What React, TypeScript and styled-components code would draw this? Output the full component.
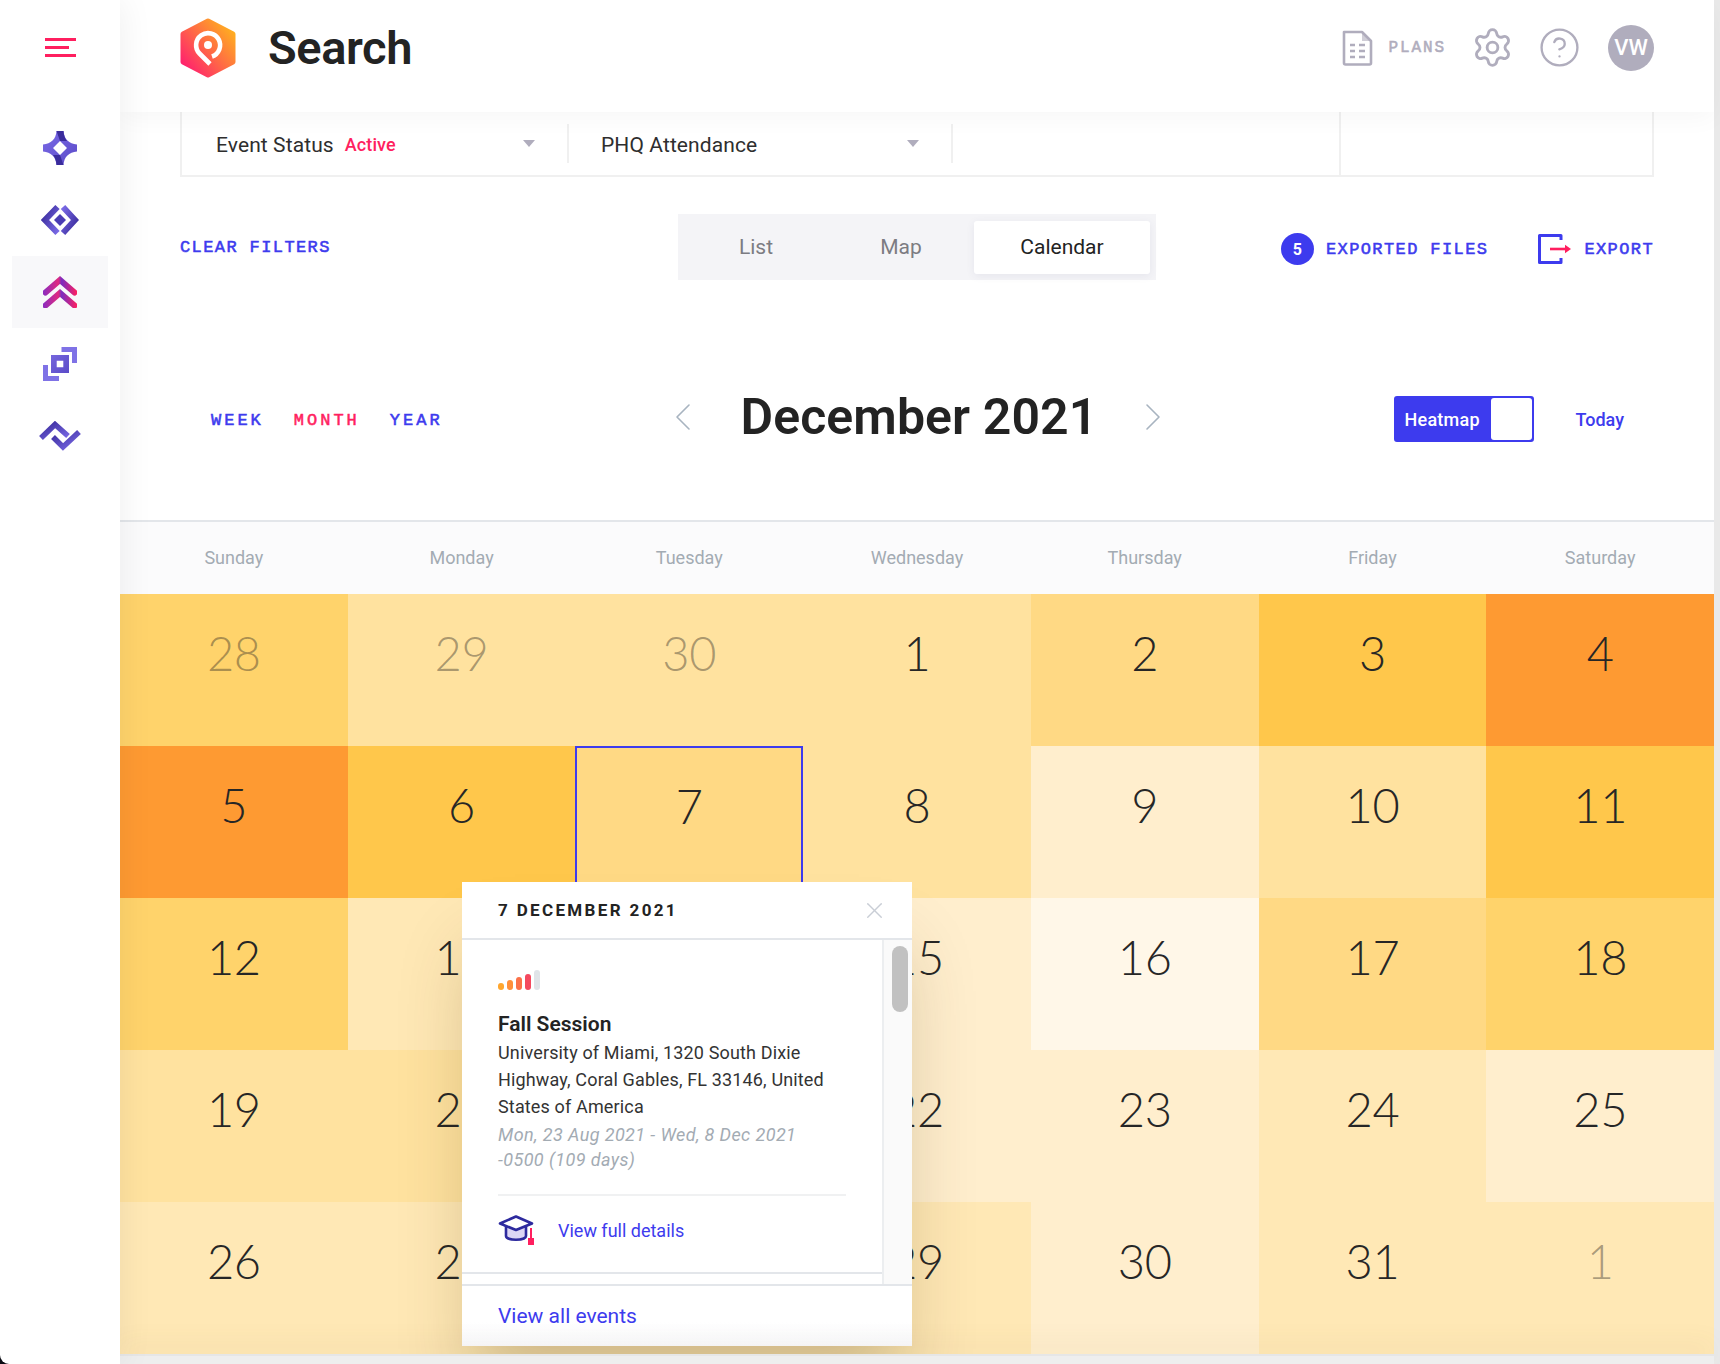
import React from "react";
import styled, { createGlobalStyle } from "styled-components";
import { Settings, CircleHelp, X, ChevronLeft, ChevronRight } from "lucide-react";

const SANS = `"Roboto", "Liberation Sans", sans-serif`;
const MONO = `"Liberation Mono", "DejaVu Sans Mono", monospace`;
const BLUE = "#3d3bee";
const PINK = "#ff1f5f";
const GRAYICON = "#b0adbd";

const Global = createGlobalStyle`
  html, body { margin: 0; padding: 0; background: #0c0c14; }
  * { box-sizing: border-box; }
  body { font-family: ${SANS}; color: #232323; }
`;

const Shell = styled.div`
  width: 1720px;
  height: 1364px;
  display: flex;
  overflow: hidden;
  background: #0c0c14;
`;

const Sidebar = styled.aside`
  width: 120px;
  flex: none;
  background: #fff;
  border-bottom-left-radius: 9px;
  display: flex;
  flex-direction: column;
  align-items: center;
  padding-top: 38px;
  position: relative;
  z-index: 4;
  box-shadow: 0 0 36px rgba(0, 0, 0, 0.07);
`;

const Burger = styled.div`
  width: 31px;
  height: 19px;
  display: flex;
  flex-direction: column;
  justify-content: space-between;
  margin-bottom: 55px;
  span { display: block; height: 3px; background: ${PINK}; }
  span:nth-child(2) { width: 24px; }
`;

const NavItem = styled.div<{ $active?: boolean }>`
  width: 96px;
  height: 72px;
  display: flex;
  align-items: center;
  justify-content: center;
  background: ${(p) => (p.$active ? "#f8f8fa" : "transparent")};
`;

const Main = styled.main`
  flex: 1;
  height: 100%;
  display: flex;
  flex-direction: column;
  background: #fff;
  border-right: 6px solid #e9e9e9;
  position: relative;
`;

const Header = styled.header`
  height: 112px;
  flex: none;
  display: flex;
  align-items: center;
  padding: 0 60px 0 60px;
  background: #fff;
  box-shadow: 0 6px 24px rgba(0, 0, 0, 0.035);
  position: relative;
  z-index: 2;
`;

const LogoWrap = styled.div`
  width: 58px;
  height: 60px;
  margin-top: -17px;
`;

const Title = styled.h1`
  margin: -17px 0 0 30px;
  font-size: 47px;
  font-weight: 600;
  letter-spacing: -0.4px;
  color: #232323;
`;

const HeaderRight = styled.div`
  margin-left: auto;
  margin-top: -17px;
  display: flex;
  align-items: center;
`;

const MonoLabel = styled.span<{ $color?: string; $wide?: boolean }>`
  font-family: ${MONO};
  font-size: 17px;
  font-weight: 400;
  -webkit-text-stroke: 0.55px currentColor;
  letter-spacing: ${(p) => (p.$wide ? "3px" : "1.4px")};
  color: ${(p) => p.$color || BLUE};
  white-space: nowrap;
`;

const PlansLabel = styled(MonoLabel)`
  margin: 0 25px 0 15px;
  font-size: 16px;
  letter-spacing: 1.9px;
`;

const HelpWrap = styled.div`
  margin: 0 27px 0 24px;
  display: flex;
`;

const Avatar = styled.div`
  width: 46px;
  height: 46px;
  border-radius: 50%;
  background: ${GRAYICON};
  color: #fff;
  font-size: 22px;
  font-weight: 500;
  display: flex;
  align-items: center;
  justify-content: center;
`;

const FilterBox = styled.div`
  margin: 0 60px;
  height: 65px;
  flex: none;
  display: flex;
  border: 2px solid #f0f0f0;
  border-top: none;
`;

const FilterCell = styled.div<{ $w: number; $pad: number }>`
  width: ${(p) => p.$w}px;
  height: 100%;
  flex: none;
  display: flex;
  align-items: center;
  padding-top: 2px;
  font-size: 21px;
  letter-spacing: 0.1px;
  color: #2e2e2e;
  position: relative;
  padding-left: ${(p) => p.$pad}px;
  &::after {
    content: "";
    position: absolute;
    right: 0;
    top: 12px;
    bottom: 12px;
    width: 2px;
    background: #f0f0f0;
  }
`;

const LastDivider = styled.div`
  margin-left: 386px;
  width: 2px;
  background: #f0f0f0;
`;

const ActiveTag = styled.span`
  color: ${PINK};
  font-size: 18px;
  font-weight: 500;
  margin-left: 11px;
`;

const Caret = styled.span<{ $r: number }>`
  position: absolute;
  right: ${(p) => p.$r}px;
  top: 28px;
  width: 0;
  height: 0;
  border-left: 6px solid transparent;
  border-right: 6px solid transparent;
  border-top: 7px solid ${GRAYICON};
`;

const ToolRow = styled.div`
  margin-top: 37px;
  height: 66px;
  flex: none;
  padding: 0 60px;
  display: grid;
  grid-template-columns: 1fr auto 1fr;
  align-items: center;
`;

const Segmented = styled.div`
  width: 478px;
  height: 66px;
  background: #f4f4f7;
  display: flex;
  align-items: center;
  padding: 0 6px 0 0;
`;

const SegItem = styled.div<{ $w: number; $active?: boolean }>`
  width: ${(p) => p.$w}px;
  height: 53px;
  display: flex;
  align-items: center;
  justify-content: center;
  font-size: 21px;
  border-radius: 3px;
  margin-left: ${(p) => (p.$active ? "6px" : "0")};
  color: ${(p) => (p.$active ? "#232323" : "#7c7c82")};
  background: ${(p) => (p.$active ? "#fff" : "transparent")};
  box-shadow: ${(p) => (p.$active ? "0 2px 8px rgba(60,60,110,.08)" : "none")};
`;

const ToolRight = styled.div`
  justify-self: end;
  margin-top: 4px;
  display: flex;
  align-items: center;
`;

const CountBadge = styled.div`
  width: 33px;
  height: 32px;
  border-radius: 50%;
  background: ${BLUE};
  color: #fff;
  font-size: 16px;
  font-weight: 700;
  display: flex;
  align-items: center;
  justify-content: center;
  margin-right: 12px;
`;

const ExportWrap = styled.div`
  margin: 0 13px 0 50px;
  display: flex;
`;

const PeriodRow = styled.div`
  margin-top: 116px;
  height: 46px;
  flex: none;
  padding: 0 90px 0 91px;
  display: grid;
  grid-template-columns: 1fr auto 1fr;
  align-items: center;
`;

const RangeTabs = styled.div`
  display: flex;
  gap: 30px;
  margin-top: 2px;
`;

const MonthNav = styled.div`
  display: flex;
  align-items: center;
  gap: 34px;
  color: #a8b4c0;
  height: 46px;
  margin-top: -4px;
`;

const MonthTitle = styled.h2`
  margin: 0;
  font-size: 50px;
  line-height: 46px;
  font-weight: 600;
  color: #232323;
  letter-spacing: 0.1px;
  width: 354px;
  text-align: center;
  white-space: nowrap;
`;

const PeriodRight = styled.div`
  justify-self: end;
  display: flex;
  align-items: center;
  gap: 42px;
`;

const HeatToggle = styled.div`
  width: 140px;
  height: 46px;
  border-radius: 3px;
  border: 2px solid ${BLUE};
  background: ${BLUE};
  display: flex;
  align-items: center;
  justify-content: space-between;
  color: #fff;
  font-size: 18px;
  font-weight: 500;
  letter-spacing: 0.25px;
  padding-left: 9px;
  i {
    display: block;
    width: 41px;
    height: 42px;
    background: #fff;
    border-radius: 3px;
  }
`;

const TodayLink = styled.span`
  color: ${BLUE};
  font-size: 18px;
  font-weight: 500;
`;

const Weekdays = styled.div`
  margin-top: 78px;
  height: 74px;
  flex: none;
  border-top: 2px solid #e3e6ea;
  padding-bottom: 2px;
  background: #fbfbfc;
  display: grid;
  grid-template-columns: repeat(7, 1fr);
  align-items: center;
  text-align: center;
  font-size: 18px;
  color: #a3abb3;
`;

const CalendarArea = styled.div`
  position: relative;
  flex: none;
  height: 760px;
`;

const Grid = styled.div`
  display: grid;
  grid-template-columns: repeat(7, 1fr);
  grid-auto-rows: 152px;
`;

const Cell = styled.div<{ $bg: string; $muted?: boolean; $selected?: boolean }>`
  background: ${(p) => p.$bg};
  display: flex;
  justify-content: center;
  padding-top: ${(p) => (p.$selected ? "28px" : "29px")};
  font-family: "Lato", ${SANS};
  font-weight: 300;
  font-size: 47px;
  line-height: 60px;
  letter-spacing: -0.3px;
  color: ${(p) => (p.$muted ? "rgba(50,45,40,.42)" : "#262626")};
  border: ${(p) => (p.$selected ? `2px solid ${BLUE}` : "none")};
`;

const BottomStrip = styled.div`
  flex: 1;
  background: #eeeeee;
  border-top: 2px solid #e6e6e6;
  box-shadow: 0 -8px 26px rgba(120, 100, 60, 0.1);
  position: relative;
  z-index: 3;
`;

const Popover = styled.section`
  position: absolute;
  left: 342px;
  top: 288px;
  width: 450px;
  height: 464px;
  background: #fff;
  box-shadow: 0 56px 70px -12px rgba(70, 50, 10, 0.24);
  display: flex;
  flex-direction: column;
  z-index: 2;
`;

const PopHead = styled.div`
  height: 58px;
  flex: none;
  border-bottom: 2px solid #e3e6ea;
  display: flex;
  align-items: center;
  justify-content: space-between;
  padding: 0 24px 0 36px;
  color: #c9ced6;
`;

const PopDate = styled.div`
  font-size: 17px;
  font-weight: 700;
  letter-spacing: 2.35px;
  color: #232323;
`;

const PopBody = styled.div`
  flex: 1;
  display: flex;
  min-height: 0;
`;

const PopScroll = styled.div`
  flex: 1;
  border-right: 2px solid #eceef0;
  display: flex;
  flex-direction: column;
`;

const EventCard = styled.article`
  height: 334px;
  flex: none;
  border-bottom: 2px solid #e3e6ea;
  padding: 30px 36px 0;
`;

const Signal = styled.div`
  display: flex;
  align-items: flex-end;
  gap: 3px;
  height: 20px;
`;

const SignalBar = styled.span<{ $h: number; $c: string }>`
  width: 6px;
  height: ${(p) => p.$h}px;
  background: ${(p) => p.$c};
  border-radius: 3px;
`;

const EventTitle = styled.h3`
  margin: 20px 0 1px;
  font-size: 21px;
  line-height: 28px;
  font-weight: 600;
  color: #232323;
`;

const Address = styled.p`
  margin: 0;
  width: 345px;
  font-size: 18px;
  line-height: 27px;
  letter-spacing: 0.15px;
  color: #333;
`;

const Dates = styled.p`
  margin: 2px 0 0;
  width: 320px;
  font-size: 18px;
  line-height: 25px;
  letter-spacing: 0.4px;
  font-style: italic;
  color: #a3abb3;
`;

const DetailRow = styled.div`
  margin-top: 22px;
  border-top: 2px solid #f0f1f2;
  padding-top: 19px;
  display: flex;
  align-items: center;
  gap: 24px;
  width: 348px;
  color: ${BLUE};
  font-size: 18px;
`;

const ScrollTrack = styled.div`
  width: 28px;
  flex: none;
  background: #fafafa;
  padding: 6px 6px 0 8px;
  span {
    display: block;
    width: 16px;
    height: 66px;
    background: #c1c1c1;
    border-radius: 8px;
  }
`;

const PopFoot = styled.div`
  height: 62px;
  flex: none;
  display: flex;
  align-items: center;
  padding-left: 36px;
  font-size: 21px;
  color: ${BLUE};
  border-top: 2px solid #e3e6ea;
  background: linear-gradient(#fff 60%, #f9f9fb);
`;

const IconStar = () => (
  <svg width="34" height="34" viewBox="0 0 34 34">
    <defs>
      <linearGradient id="s1" x1="0" y1="0" x2="1" y2="1">
        <stop offset="0" stopColor="#7a6ae6" />
        <stop offset="1" stopColor="#5b4bc8" />
      </linearGradient>
    </defs>
    <path fillRule="evenodd" fill="url(#s1)" d="M13.5 0H20.5C21 8 26 13 34 13.5V20.5C26 21 21 26 20.5 34H13.5C13 26 8 21 0 20.5V13.5C8 13 13 8 13.5 0ZM17 10L10 17L17 24L24 17Z" />
    <path fill="#3a2c9c" d="M13.5 0H20.5C20.7 4 22 7.5 24 10L17 10ZM20.5 34H13.5C13.3 30 12 26.5 10 24L17 24Z" />
  </svg>
);

const IconDiamond = () => (
  <svg width="38" height="32" viewBox="0 0 38 32" fill="none">
    <defs>
      <linearGradient id="s2" x1="0" y1="0" x2="1" y2="1">
        <stop offset="0" stopColor="#3a2c9c" />
        <stop offset="1" stopColor="#7a6ae6" />
      </linearGradient>
      <linearGradient id="s2b" x1="0" y1="0" x2="1" y2="1">
        <stop offset="0" stopColor="#7a6ae6" />
        <stop offset="1" stopColor="#3a2c9c" />
      </linearGradient>
    </defs>
    <path d="M16.500 3L4 16L16.500 29" stroke="url(#s2)" strokeWidth="6" />
    <path d="M22 3L34 16L22 29" stroke="url(#s2b)" strokeWidth="6" />
    <path d="M19 10L25 16L19 22L13 16Z" fill="#4a3cb4" />
  </svg>
);

const IconChevrons = () => (
  <svg width="34" height="32" viewBox="0 0 34 32" fill="none">
    <defs>
      <linearGradient id="s3" x1="0" y1="0" x2="34" y2="0" gradientUnits="userSpaceOnUse">
        <stop offset="0" stopColor="#8a2cc0" />
        <stop offset="0.45" stopColor="#e02a80" />
        <stop offset="0.55" stopColor="#7a2cc0" />
        <stop offset="1" stopColor="#ff2060" />
      </linearGradient>
    </defs>
    <path d="M2.500 16.500L17 4L31.500 16.500" stroke="url(#s3)" strokeWidth="6" strokeLinecap="round" />
    <path d="M2.500 29.500L17 17L31.500 29.500" stroke="url(#s3)" strokeWidth="6" strokeLinecap="round" />
  </svg>
);

const IconSquares = () => (
  <svg width="34" height="34" viewBox="0 0 34 34">
    <defs>
      <linearGradient id="s4" x1="0" y1="0" x2="1" y2="1">
        <stop offset="0" stopColor="#7566dd" />
        <stop offset="1" stopColor="#5b4bc8" />
      </linearGradient>
    </defs>
    <path fillRule="evenodd" fill="url(#s4)" d="M8 8H26V26H8ZM13.700 13.700V20.300H20.300V13.700Z" />
    <path fill="#7f72e6" d="M18.500 0H34V16H29V5H18.500ZM0 18H5V29H16V34H0Z" />
  </svg>
);

const IconZigzag = () => (
  <svg width="42" height="30" viewBox="0 0 42 30" fill="none">
    <defs>
      <linearGradient id="s5" x1="0" y1="0" x2="1" y2="1">
        <stop offset="0" stopColor="#3a2c9c" />
        <stop offset="1" stopColor="#7a6ae6" />
      </linearGradient>
    </defs>
    <path d="M2 17L16 3.500L29 15" stroke="url(#s5)" strokeWidth="5.500" />
    <path d="M14 16L24 26L40 11" stroke="url(#s5)" strokeWidth="5.500" />
  </svg>
);

const Logo = () => (
  <svg width="56" height="60" viewBox="0 0 56 60">
    <defs>
      <linearGradient id="lg" x1="4" y1="50" x2="52" y2="10" gradientUnits="userSpaceOnUse">
        <stop offset="0" stopColor="#ff1f6f" />
        <stop offset="0.5" stopColor="#ff6a45" />
        <stop offset="1" stopColor="#ffb01f" />
      </linearGradient>
    </defs>
    <path d="M28 3L53 16V44L28 57L3 44V16Z" fill="url(#lg)" stroke="url(#lg)" strokeWidth="5" strokeLinejoin="round" />
    <path d="M30 46L19.500 35.500A12 12 0 1 1 32 38.500" fill="none" stroke="#fff" strokeWidth="4.600" />
    <circle cx="28" cy="27" r="4" fill="#fff" />
  </svg>
);

const DocIcon = () => (
  <svg width="31" height="36" viewBox="0 0 31 36" fill="none">
    <path d="M2 2H20L29 11V33A1.500 1.500 0 0 1 27.500 34.500H3.500A1.500 1.500 0 0 1 2 33Z" stroke={GRAYICON} strokeWidth="2.600" strokeLinejoin="round" />
    <path d="M20 2V11H29Z" fill={GRAYICON} opacity="0.6" />
    <path d="M8 15H13M17 15H23M8 21H13M17 21H23M8 27H13M17 27H23" stroke={GRAYICON} strokeWidth="2.400" />
  </svg>
);

const ExportIcon = () => (
  <svg width="33" height="30" viewBox="0 0 33 30" fill="none">
    <path d="M23 6V1.500H1.500V28.500H23V24" stroke={BLUE} strokeWidth="3" strokeLinejoin="round" />
    <path d="M12 15H28" stroke={PINK} strokeWidth="2.600" />
    <path d="M27 10.800L33 15L27 19.200Z" fill={PINK} />
  </svg>
);

const CapIcon = () => (
  <svg width="36" height="30" viewBox="0 0 36 30" fill="none">
    <path d="M8 11V21C8 26 28 26 28 21V11Z" fill="#dcd6f5" stroke="#2d2a9e" strokeWidth="2.600" />
    <path d="M18 1.500L34 8.500L18 15L2 8.500Z" fill="#fff" stroke="#2d2a9e" strokeWidth="2.600" strokeLinejoin="round" />
    <path d="M33 13V24" stroke={PINK} strokeWidth="2" />
    <path d="M30 23H36V30H30Z" fill={PINK} />
  </svg>
);

const A = "#fe9a32";
const B = "#ffc74b";
const C = "#ffd36b";
const D = "#ffd984";
const E = "#ffe29f";
const F = "#ffe8b5";
const G = "#ffeecd";
const H = "#fff7e8";

type Day = { n: number; c: string; m?: boolean; s?: boolean };

const days: Day[] = [
  { n: 28, c: C, m: true }, { n: 29, c: E, m: true }, { n: 30, c: E, m: true }, { n: 1, c: E }, { n: 2, c: D }, { n: 3, c: B }, { n: 4, c: A },
  { n: 5, c: A }, { n: 6, c: B }, { n: 7, c: D, s: true }, { n: 8, c: E }, { n: 9, c: G }, { n: 10, c: E }, { n: 11, c: B },
  { n: 12, c: C }, { n: 13, c: F }, { n: 14, c: F }, { n: 15, c: G }, { n: 16, c: H }, { n: 17, c: D }, { n: 18, c: C },
  { n: 19, c: E }, { n: 20, c: E }, { n: 21, c: F }, { n: 22, c: G }, { n: 23, c: G }, { n: 24, c: F }, { n: 25, c: G },
  { n: 26, c: F }, { n: 27, c: F }, { n: 28, c: F }, { n: 29, c: F }, { n: 30, c: G }, { n: 31, c: F }, { n: 1, c: F, m: true },
];

const weekdays = ["Sunday", "Monday", "Tuesday", "Wednesday", "Thursday", "Friday", "Saturday"];
const bars: [number, string][] = [
  [7, "#ffa62e"],
  [10, "#ff8f3a"],
  [13, "#fb7148"],
  [16, "#f4495f"],
  [20, "#e0e4e8"],
];

export default function App() {
  return (
    <>
      <Global />
      <Shell>
        <Sidebar>
          <Burger>
            <span />
            <span />
            <span />
          </Burger>
          <NavItem><IconStar /></NavItem>
          <NavItem><IconDiamond /></NavItem>
          <NavItem $active><IconChevrons /></NavItem>
          <NavItem><IconSquares /></NavItem>
          <NavItem><IconZigzag /></NavItem>
        </Sidebar>
        <Main>
          <Header>
            <LogoWrap><Logo /></LogoWrap>
            <Title>Search</Title>
            <HeaderRight>
              <DocIcon />
              <PlansLabel $color={GRAYICON}>PLANS</PlansLabel>
              <Settings size={43} color={GRAYICON} strokeWidth={1.6} />
              <HelpWrap><CircleHelp size={43} color={GRAYICON} strokeWidth={1.3} /></HelpWrap>
              <Avatar>VW</Avatar>
            </HeaderRight>
          </Header>
          <FilterBox>
            <FilterCell $w={387} $pad={34}>
              Event Status<ActiveTag>Active</ActiveTag>
              <Caret $r={34} />
            </FilterCell>
            <FilterCell $w={384} $pad={32}>
              PHQ Attendance
              <Caret $r={34} />
            </FilterCell>
            <LastDivider />
          </FilterBox>
          <ToolRow>
            <MonoLabel>CLEAR FILTERS</MonoLabel>
            <Segmented>
              <SegItem $w={156}>List</SegItem>
              <SegItem $w={134}>Map</SegItem>
              <SegItem $w={176} $active>Calendar</SegItem>
            </Segmented>
            <ToolRight>
              <CountBadge>5</CountBadge>
              <MonoLabel>EXPORTED FILES</MonoLabel>
              <ExportWrap><ExportIcon /></ExportWrap>
              <MonoLabel>EXPORT</MonoLabel>
            </ToolRight>
          </ToolRow>
          <PeriodRow>
            <RangeTabs>
              <MonoLabel $wide>WEEK</MonoLabel>
              <MonoLabel $wide $color={PINK}>MONTH</MonoLabel>
              <MonoLabel $wide>YEAR</MonoLabel>
            </RangeTabs>
            <MonthNav>
              <ChevronLeft size={48} strokeWidth={0.8} />
              <MonthTitle>December 2021</MonthTitle>
              <ChevronRight size={48} strokeWidth={0.8} />
            </MonthNav>
            <PeriodRight>
              <HeatToggle>Heatmap<i /></HeatToggle>
              <TodayLink>Today</TodayLink>
            </PeriodRight>
          </PeriodRow>
          <Weekdays>
            {weekdays.map((d) => (
              <span key={d}>{d}</span>
            ))}
          </Weekdays>
          <CalendarArea>
            <Grid>
              {days.map((d, i) => (
                <Cell key={i} $bg={d.c} $muted={d.m} $selected={d.s}>
                  {d.n}
                </Cell>
              ))}
            </Grid>
            <Popover>
              <PopHead>
                <PopDate>7 DECEMBER 2021</PopDate>
                <X size={27} strokeWidth={1.3} />
              </PopHead>
              <PopBody>
                <PopScroll>
                  <EventCard>
                    <Signal>
                      {bars.map(([h, c]) => (
                        <SignalBar key={c} $h={h} $c={c} />
                      ))}
                    </Signal>
                    <EventTitle>Fall Session</EventTitle>
                    <Address>University of Miami, 1320 South Dixie Highway, Coral Gables, FL 33146, United States of America</Address>
                    <Dates>Mon, 23 Aug 2021 - Wed, 8 Dec 2021 -0500 (109 days)</Dates>
                    <DetailRow>
                      <CapIcon />
                      View full details
                    </DetailRow>
                  </EventCard>
                </PopScroll>
                <ScrollTrack><span /></ScrollTrack>
              </PopBody>
              <PopFoot>View all events</PopFoot>
            </Popover>
          </CalendarArea>
          <BottomStrip />
        </Main>
      </Shell>
    </>
  );
}
